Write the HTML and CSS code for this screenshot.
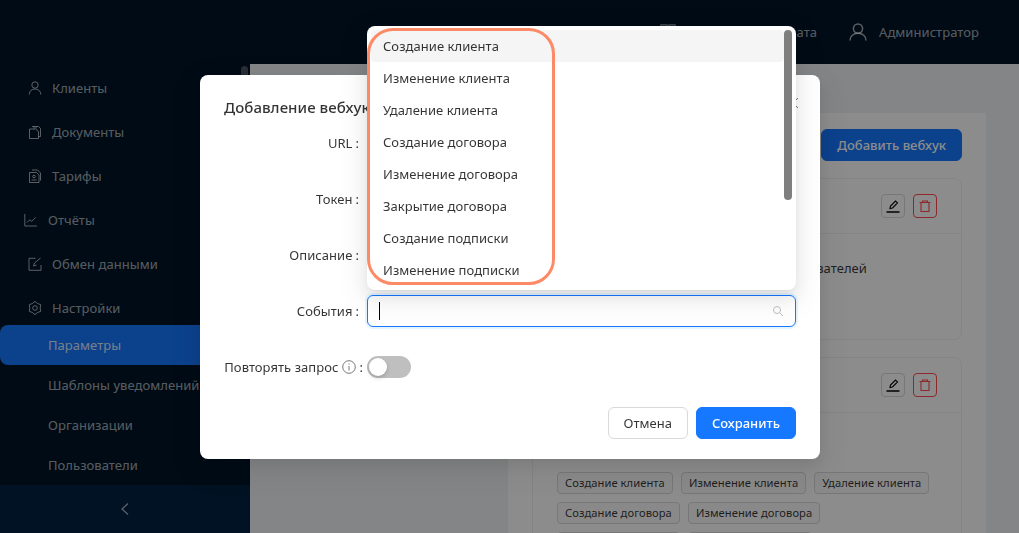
FILE: index.html
```html
<!DOCTYPE html>
<html lang="ru">
<head>
    <meta charset="UTF-8">
    <meta name="viewport" content="width=device-width, initial-scale=1.0">
    <title>Вебхуки</title>
    <link rel="stylesheet" href="styles.css">
</head>
<body>

<header class="topbar">
    <div class="topbar-item plan">
        <svg class="topbar-icon" viewBox="0 0 18 18"><rect x="1" y="1" width="7" height="7"/><rect x="10" y="1" width="7" height="7"/><rect x="1" y="10" width="7" height="7"/><rect x="10" y="10" width="7" height="7"/></svg>
        <span>Подписка и оплата</span>
    </div>
    <div class="topbar-item user">
        <svg class="topbar-icon big" viewBox="0 0 18 18"><circle cx="9" cy="5.600" r="4.600"/><path d="M1 17.500c0-4.400 3.400-7.300 8-7.300s8 2.900 8 7.300"/></svg>
        <span>Администратор</span>
    </div>
</header>

<div class="layout">
    <aside class="sidebar">
        <span class="side-thumb"></span>
        <nav class="menu">
            <a class="menu-item">
                <svg class="menu-icon" viewBox="0 0 14 14"><circle cx="7" cy="4" r="3.200"/><path d="M1.200 13.500c0-3.300 2.500-5.500 5.800-5.500s5.800 2.200 5.800 5.500"/></svg>
                Клиенты
            </a>
            <a class="menu-item">
                <svg class="menu-icon" viewBox="0 0 14 14"><path d="M4 1.500h6.500l2 2v8h-2"/><path d="M1.500 4h6l3 2.500v7h-9z"/><path d="M6 1.500v2M8 1.500v2"/></svg>
                Документы
            </a>
            <a class="menu-item">
                <svg class="menu-icon" viewBox="0 0 14 14"><path d="M4 1h5.500l3 3v7.500"/><path d="M1.500 3.500h7l2.500 2.500v7.500h-9.500z"/><circle cx="6" cy="7.500" r="1.300"/><path d="M3.500 11h5"/></svg>
                Тарифы
            </a>
            <a class="menu-item shifted">
                <svg class="menu-icon" viewBox="0 0 14 14"><path d="M.8 1v12h12.200"/><path d="M3 9.500l2.700-2.700 2 1.500 4-3.800"/></svg>
                Отчёты
            </a>
            <a class="menu-item">
                <svg class="menu-icon" viewBox="0 0 14 14"><path d="M13 8v5.300H1V1.300h6.500"/><path d="M5.500 9l1-3 6-5M5.500 9l3-1"/></svg>
                Обмен данными
            </a>
            <a class="menu-item">
                <svg class="menu-icon" viewBox="0 0 14 14"><path d="M7 .4L9.600 2.500 12.700 3.700 12.200 7 12.700 10.300 9.600 11.500 7 13.600 4.400 11.500 1.300 10.300 1.800 7 1.300 3.700 4.400 2.500Z"/><circle cx="7" cy="7" r="2.300"/></svg>
                Настройки
            </a>
            <div class="submenu">
                <a class="sub-item active">Параметры</a>
                <a class="sub-item">Шаблоны уведомлений</a>
                <a class="sub-item">Организации</a>
                <a class="sub-item">Пользователи</a>
            </div>
        </nav>
        <div class="collapse">
            <svg viewBox="0 0 10 14"><path d="M8 1.500L2 7l6 5.500"/></svg>
        </div>
    </aside>

    <main class="main">
        <section class="panel">
            <div class="toolbar">
                <button class="btn btn-primary">Добавить вебхук</button>
            </div>

            <div class="card">
                <div class="card-head">
                    <button class="icon-btn">
                        <svg viewBox="0 0 16 16"><path d="M5 10.500l.5-2.500 5-5 2 2-5 5z"/><path class="underline" d="M1.500 14h13"/></svg>
                    </button>
                    <button class="icon-btn danger">
                        <svg viewBox="0 0 16 16"><path d="M2.500 4.500h11M5.500 4.500V3h5v1.500M4 4.500v9h8v-9"/></svg>
                    </button>
                </div>
                <div class="card-body">
                    <p class="card-text">Сервис рассылки уведомлений пользователей</p>
                </div>
            </div>

            <div class="card">
                <div class="card-head">
                    <button class="icon-btn">
                        <svg viewBox="0 0 16 16"><path d="M5 10.500l.5-2.500 5-5 2 2-5 5z"/><path class="underline" d="M1.500 14h13"/></svg>
                    </button>
                    <button class="icon-btn danger">
                        <svg viewBox="0 0 16 16"><path d="M2.500 4.500h11M5.500 4.500V3h5v1.500M4 4.500v9h8v-9"/></svg>
                    </button>
                </div>
                <div class="card-body tags-body">
                    <div class="tags">
                        <span class="tag">Создание клиента</span>
                        <span class="tag">Изменение клиента</span>
                        <span class="tag">Удаление клиента</span>
                        <span class="tag">Создание договора</span>
                        <span class="tag">Изменение договора</span>
                        <span class="tag">Закрытие договора</span>
                        <span class="tag">Создание подписки</span>
                    </div>
                </div>
            </div>
        </section>
    </main>
</div>

<div class="mask"></div>

<div class="modal">
    <h2 class="modal-title">Добавление вебхука</h2>
    <svg class="modal-close" viewBox="0 0 12 12"><path d="M1 1l10 10M11 1L1 11"/></svg>

    <form class="form">
        <label class="form-label">URL</label>
        <input class="input" type="text">
        <label class="form-label">Токен</label>
        <input class="input" type="text">
        <label class="form-label">Описание</label>
        <input class="input" type="text">
        <label class="form-label">События</label>
        <div class="select">
            <span class="caret"></span>
            <svg class="search-icon" viewBox="0 0 12 12"><circle cx="5" cy="5" r="3.500"/><path d="M7.800 7.800L11 11"/></svg>

            <div class="dropdown">
                <ul class="options">
                    <li class="option current">Создание клиента</li>
                    <li class="option">Изменение клиента</li>
                    <li class="option">Удаление клиента</li>
                    <li class="option">Создание договора</li>
                    <li class="option">Изменение договора</li>
                    <li class="option">Закрытие договора</li>
                    <li class="option">Создание подписки</li>
                    <li class="option">Изменение подписки</li>
                </ul>
                <span class="thumb"></span>
                <span class="highlight"></span>
            </div>
        </div>
        <label class="form-label long">
            Повторять запрос
            <svg class="info" viewBox="0 0 14 14"><circle cx="7" cy="7" r="6.300"/><path d="M7 6v4.500M7 3.400v1.200"/></svg>
        </label>
        <span class="switch"><span class="knob"></span></span>
    </form>

    <div class="modal-footer">
        <button class="btn">Отмена</button>
        <button class="btn btn-primary">Сохранить</button>
    </div>
</div>

</body>
</html>
```

FILE: styles.css
```css
* {
    box-sizing: border-box;
}
body {
    font-family: 'Noto Sans', 'Open Sans', sans-serif;
    font-size: 13px;
    letter-spacing: 0.05px;
    color: rgba(0, 0, 0, 0.8);
    display: flex;
    flex-direction: column;
    height: 100vh;
    margin: 0;
    overflow: hidden;
    background-color: #f0f2f5;
}
svg {
    fill: none;
    stroke: currentColor;
}

/* Шапка */
.topbar {
    display: flex;
    justify-content: flex-end;
    align-items: center;
    gap: 32px;
    height: 64px;
    flex-shrink: 0;
    padding-right: 40px;
    background-color: #001529;
    color: rgba(255, 255, 255, 0.65);
}
.topbar-item {
    display: flex;
    align-items: center;
    gap: 12px;
}
.topbar-item.plan {
    gap: 21px;
}
.topbar-icon {
    width: 16px;
    height: 16px;
    stroke-width: 1.200;
}
.topbar-icon.big {
    width: 18px;
    height: 18px;
    stroke-width: 1.500;
}

/* Боковое меню */
.layout {
    display: flex;
    flex: 1;
    min-height: 0;
}
.sidebar {
    position: relative;
    display: flex;
    flex-direction: column;
    width: 250px;
    flex-shrink: 0;
    background-color: #001529;
    color: rgba(255, 255, 255, 0.65);
}
.side-thumb {
    position: absolute;
    top: 2px;
    left: 241px;
    width: 7px;
    height: 60px;
    border-radius: 4px;
    background-color: #4b5560;
}
.menu {
    flex: 1;
    padding-top: 4px;
    overflow: hidden;
}
.menu-item {
    display: flex;
    align-items: center;
    gap: 10px;
    height: 40px;
    margin-bottom: 4px;
    padding-left: 28px;
}
.menu-item.shifted {
    padding-left: 24px;
}
.menu-icon {
    width: 14px;
    height: 14px;
    stroke-width: 1;
    flex-shrink: 0;
}
.submenu {
    margin-top: -7px;
}
.sub-item {
    display: block;
    height: 40px;
    line-height: 40px;
    padding-left: 48px;
    white-space: nowrap;
}
.sub-item.active {
    border-radius: 8px 0 0 8px;
    background-color: #1677ff;
    color: rgba(255, 255, 255, 0.85);
}
.collapse {
    display: flex;
    align-items: center;
    justify-content: center;
    height: 48px;
    flex-shrink: 0;
    background-color: #002140;
}
.collapse svg {
    width: 10px;
    height: 14px;
    stroke-width: 1.300;
}

/* Основная часть */
.main {
    display: flex;
    flex: 1;
    min-width: 0;
    padding: 49px 33px 0 258px;
}
.panel {
    flex: 1;
    min-width: 0;
    padding: 16px 24px 0;
    background-color: #fff;
}
.toolbar {
    display: flex;
    justify-content: flex-end;
    margin-bottom: 17px;
}
.card {
    margin-bottom: 17px;
    border: 1px solid #f0f0f0;
    border-radius: 8px;
}
.card-head {
    display: flex;
    justify-content: flex-end;
    gap: 8px;
    height: 55px;
    padding: 15px 24px 0;
    border-bottom: 1px solid #f0f0f0;
}
.card-body {
    height: 105px;
    padding: 23px 24px;
}
.tags-body {
    height: auto;
    padding-top: 59px;
}
.card-text {
    margin: 0 0 0 12px;
    line-height: 22px;
    white-space: nowrap;
}
.tags {
    display: flex;
    flex-wrap: wrap;
    gap: 8px;
}
.tag {
    height: 22px;
    line-height: 20px;
    padding: 0 7px;
    font-size: 11.200px;
    border: 1px solid #d9d9d9;
    border-radius: 4px;
    background-color: #fafafa;
}
.icon-btn {
    display: flex;
    align-items: center;
    justify-content: center;
    width: 24px;
    height: 24px;
    padding: 0;
    border: 1px solid #d9d9d9;
    border-radius: 4px;
    background-color: #fff;
    color: #000;
}
.icon-btn svg {
    width: 16px;
    height: 16px;
    stroke-width: 1.100;
}
.icon-btn .underline {
    stroke-width: 1.500;
}
.icon-btn.danger {
    border-color: #ff4d4f;
    color: #ff4d4f;
}

/* Кнопки */
.btn {
    height: 32px;
    padding: 0 15px;
    font-family: inherit;
    font-size: 13px;
    color: rgba(0, 0, 0, 0.8);
    border: 1px solid #d9d9d9;
    border-radius: 6px;
    background-color: #fff;
}
.btn-primary {
    font-weight: 500;
    color: #fff;
    border-color: #1677ff;
    background-color: #1677ff;
}

/* Модальное окно */
.mask {
    position: fixed;
    inset: 0;
    background-color: rgba(0, 0, 0, 0.45);
}
.modal {
    position: absolute;
    top: 75px;
    left: 200px;
    width: 620px;
    padding: 20px 24px;
    border-radius: 8px;
    background-color: #fff;
    box-shadow: 0 6px 16px rgba(0, 0, 0, 0.08), 0 9px 28px 8px rgba(0, 0, 0, 0.05);
}
.modal-title {
    margin: 0 0 8px;
    font-size: 15px;
    font-weight: 500;
    line-height: 24px;
}
.modal-close {
    position: absolute;
    top: 22px;
    right: 21px;
    width: 12px;
    height: 12px;
    color: #777;
}
.form {
    display: grid;
    grid-template-columns: 135px 1fr;
    grid-auto-rows: 32px;
    column-gap: 8px;
    row-gap: 24px;
}
.form-label {
    display: flex;
    align-items: center;
    justify-content: flex-end;
    white-space: nowrap;
}
.form-label::after {
    content: ":";
    margin-left: 3px;
}
.form-label.long {
    margin-right: -4px;
}
.info {
    width: 14px;
    height: 14px;
    flex-shrink: 0;
    margin-left: 4px;
    color: #777;
}
.input {
    height: 32px;
    border: 1px solid #d9d9d9;
    border-radius: 6px;
}
.select {
    position: relative;
    display: flex;
    align-items: center;
    justify-content: space-between;
    height: 32px;
    padding: 0 11px;
    border: 1px solid #1677ff;
    border-radius: 6px;
    box-shadow: 0 0 0 2px rgba(5, 145, 255, 0.1);
}
.caret {
    width: 1px;
    height: 18px;
    background-color: #000;
}
.search-icon {
    width: 12px;
    height: 12px;
    color: #bfbfbf;
}
.dropdown {
    position: absolute;
    left: -1px;
    right: -1px;
    bottom: 36px;
    height: 264px;
    padding: 4px;
    border-radius: 8px;
    background-color: #fff;
    box-shadow: 0 6px 16px rgba(0, 0, 0, 0.08), 0 3px 6px -4px rgba(0, 0, 0, 0.12), 0 9px 28px 8px rgba(0, 0, 0, 0.05);
}
.options {
    list-style: none;
    margin: 0;
    padding: 0 8px 0 0;
}
.option {
    height: 32px;
    line-height: 32px;
    padding: 0 12px;
    border-radius: 4px;
}
.option.current {
    background-color: #f5f5f5;
}
.thumb {
    position: absolute;
    top: 4px;
    right: 4px;
    width: 8px;
    height: 170px;
    border-radius: 4px;
    background-color: #7f7f7f;
}
.highlight {
    position: absolute;
    top: 2px;
    left: 0;
    width: 188px;
    height: 257px;
    border: 3px solid #fd8a66;
    border-radius: 26px;
}
.switch {
    display: flex;
    align-items: center;
    align-self: center;
    width: 44px;
    height: 22px;
    padding: 2px;
    border-radius: 11px;
    background-color: #bfbfbf;
}
.knob {
    width: 18px;
    height: 18px;
    border-radius: 50%;
    background-color: #fff;
    box-shadow: 0 2px 4px rgba(0, 35, 11, 0.2);
}
.modal-footer {
    display: flex;
    justify-content: flex-end;
    gap: 8px;
    margin-top: 24px;
}
```
